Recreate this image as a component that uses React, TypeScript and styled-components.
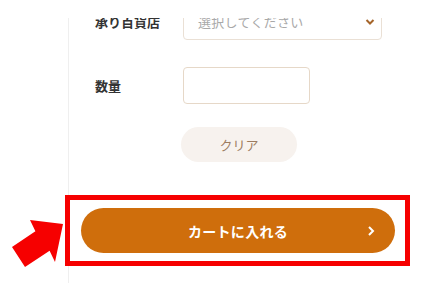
import React from 'react';
import styled, { createGlobalStyle } from 'styled-components';

const GlobalStyle = createGlobalStyle`
  html, body {
    margin: 0;
    padding: 0;
    background: #fff;
  }
  body {
    font-family: "Noto Sans CJK JP", "Noto Sans", sans-serif;
    color: #333;
  }
  * {
    box-sizing: border-box;
  }
`;

const Screen = styled.div`
  position: relative;
  width: 424px;
  height: 283px;
  padding-top: 18px;
  overflow: hidden;
  background: #fff;
`;

const Scroller = styled.div`
  height: 265px;
  overflow: hidden;
`;

const Card = styled.div`
  margin-left: 68px;
  min-height: 300px;
  border-left: 1px solid #efefef;
  padding-left: 26px;
`;

const FormRow = styled.div<{ first?: boolean }>`
  display: grid;
  grid-template-columns: 88px auto;
  align-items: center;
  margin-top: ${p => (p.first ? '-15px' : '27px')};
`;

const Label = styled.div`
  font-size: 13px;
  font-weight: 700;
  color: #333;
  line-height: 1;
  white-space: nowrap;
`;

const SelectBox = styled.div`
  display: flex;
  align-items: center;
  justify-content: space-between;
  width: 199px;
  height: 37px;
  padding: 0 6px 0 14px;
  border: 1px solid #eae0d5;
  border-radius: 4px;
  background: #fff;
`;

const Placeholder = styled.span`
  font-size: 13px;
  color: #a9a9a9;
  letter-spacing: 0.3px;
`;

const QtyInput = styled.input`
  width: 127px;
  height: 37px;
  border: 1px solid #e6d8c8;
  border-radius: 4px;
  background: #fff;
  outline: none;
`;

const ClearButton = styled.button`
  display: block;
  width: 116px;
  height: 35px;
  margin: 23px 0 0 86px;
  border: none;
  border-radius: 18px;
  background: #f7f2ee;
  font-family: inherit;
  font-size: 13px;
  color: #9c7c60;
  cursor: pointer;
`;

const Highlight = styled.div`
  width: 345px;
  margin: 33px 0 0 -30px;
  padding: 8px 9px 8px 11px;
  border: 5px solid #f60000;
`;

const CartButton = styled.button`
  position: relative;
  display: flex;
  align-items: center;
  justify-content: center;
  width: 314px;
  height: 45px;
  border: none;
  border-radius: 23px;
  background: #cf6e0c;
  font-family: inherit;
  font-size: 14px;
  font-weight: 700;
  color: #fff;
  letter-spacing: 0.3px;
  cursor: pointer;
`;

const CartChevron = styled.svg`
  position: absolute;
  right: 20px;
  top: 50%;
  margin-top: -6px;
`;

const Pointer = styled.svg`
  position: absolute;
  left: 0;
  top: 0;
  pointer-events: none;
`;

const App: React.FC = () => {
  return (
    <>
      <GlobalStyle />
      <Screen>
        <Scroller>
          <Card>
            <FormRow first>
              <Label>承り百貨店</Label>
              <SelectBox>
                <Placeholder>選択してください</Placeholder>
                <svg width="10" height="8" viewBox="0 0 10 8">
                  <path d="M1.5 2 L5 5.5 L8.5 2" fill="none" stroke="#a5652a" strokeWidth="2" />
                </svg>
              </SelectBox>
            </FormRow>
            <FormRow>
              <Label>数量</Label>
              <QtyInput type="text" />
            </FormRow>
            <ClearButton>クリア</ClearButton>
            <Highlight>
              <CartButton>
                カートに入れる
                <CartChevron width="8" height="12" viewBox="0 0 8 12">
                  <path d="M2 2 L6 6 L2 10" fill="none" stroke="#fff" strokeWidth="2" />
                </CartChevron>
              </CartButton>
            </Highlight>
          </Card>
        </Scroller>
        <Pointer width="424" height="283" viewBox="0 0 424 283">
          <polygon
            points="12,247 35.4,231.3 30,220 63,224 55,262 49.6,250.7 25,267"
            fill="#f60000"
          />
        </Pointer>
      </Screen>
    </>
  );
};

export default App;
